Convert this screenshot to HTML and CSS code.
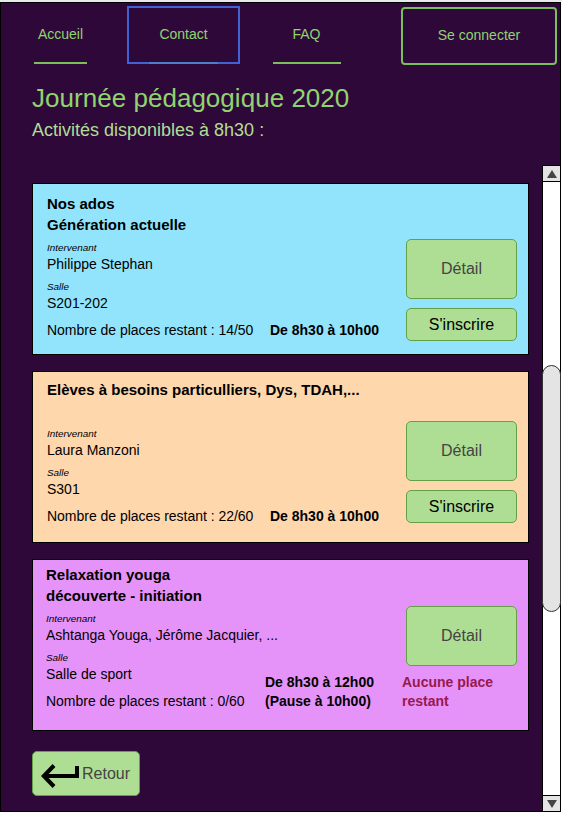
FILE: index.html
```html
<!DOCTYPE html>
<html lang="fr">
<head>
<meta charset="utf-8">
<title>Journée pédagogique 2020</title>
<link rel="stylesheet" href="styles.css">
</head>
<body>
<div class="frame">
  <nav class="nav">
    <a class="link link-home">Accueil</a>
    <a class="link link-contact"><span>Contact</span></a>
    <a class="link link-faq">FAQ</a>
    <a class="login">Se connecter</a>
  </nav>
  <div class="body">
    <main class="main">
      <h1>Journée pédagogique 2020</h1>
      <h2>Activités disponibles à 8h30 :</h2>
      <div class="cards">
        <article class="card blue">
          <div class="info">
            <h3>Nos ados<br>Génération actuelle</h3>
            <div class="label">Intervenant</div>
            <div class="value">Philippe Stephan</div>
            <div class="label">Salle</div>
            <div class="value">S201-202</div>
            <div class="places">Nombre de places restant : 14/50</div>
          </div>
          <div class="time">De 8h30 à 10h00</div>
          <div class="actions">
            <button class="btn detail">Détail</button>
            <button class="btn join">S'inscrire</button>
          </div>
        </article>
        <article class="card orange">
          <div class="info">
            <h3>Elèves à besoins particulliers, Dys, TDAH,...</h3>
            <div class="label">Intervenant</div>
            <div class="value">Laura Manzoni</div>
            <div class="label">Salle</div>
            <div class="value">S301</div>
            <div class="places">Nombre de places restant : 22/60</div>
          </div>
          <div class="time">De 8h30 à 10h00</div>
          <div class="actions">
            <button class="btn detail">Détail</button>
            <button class="btn join">S'inscrire</button>
          </div>
        </article>
        <article class="card pink">
          <div class="info">
            <h3>Relaxation youga<br>découverte - initiation</h3>
            <div class="label">Intervenant</div>
            <div class="value">Ashtanga Youga, Jérôme Jacquier, ...</div>
            <div class="label">Salle</div>
            <div class="value">Salle de sport</div>
            <div class="places">Nombre de places restant : 0/60</div>
          </div>
          <div class="time">De 8h30 à 12h00<br>(Pause à 10h00)</div>
          <div class="actions">
            <button class="btn detail">Détail</button>
            <div class="full">Aucune place<br>restant</div>
          </div>
        </article>
      </div>
      <button class="btn back">
        <svg width="38" height="24" viewBox="0 0 38 24"><path d="M36 2V12H2.500M13 1.500L2.800 12L13 22.500" fill="none" stroke="#000" stroke-width="4"/></svg>
        <span>Retour</span>
      </button>
    </main>
    <div class="scrollbar">
      <div class="arrow up"><svg width="10" height="8" viewBox="0 0 10 8"><path d="M5 0L10 8H0Z" fill="#444"/></svg></div>
      <div class="track"><div class="thumb"></div></div>
      <div class="arrow down"><svg width="10" height="8" viewBox="0 0 10 8"><path d="M0 0H10L5 8Z" fill="#444"/></svg></div>
    </div>
  </div>
</div>
</body>
</html>
```
FILE: styles.css
```css
* { box-sizing: border-box; }
body {
  margin: 0;
  height: 813px;
  overflow: hidden;
  background: #fff;
  border-top: 2px solid #e9e9ed;
  font-family: "Liberation Sans", Arial, sans-serif;
}
h1, h2, h3 { margin: 0; }
.frame {
  width: 561px;
  height: 810px;
  background: #2f083a;
  border: 1px solid #000;
  display: flex;
  flex-direction: column;
}
.nav {
  height: 62px;
  flex-shrink: 0;
  display: flex;
  align-items: flex-end;
  padding-left: 33px;
  color: #8fd46e;
  font-size: 14px;
  white-space: nowrap;
}
.link {
  height: 58px;
  line-height: 56px;
  margin-bottom: 1px;
  text-align: center;
  border-bottom: 2px solid #7abf58;
}
.link-home { width: 53px; }
.link-contact {
  width: 113px;
  margin-left: 40px;
  border: 2px solid #3f63d2;
  display: flex;
  justify-content: center;
  line-height: 52px;
}
.link-contact span {
  width: 69px;
  height: 56px;
  border-bottom: 2px solid #4a80c6;
}
.link-faq { width: 68px; margin-left: 33px; padding-right: 1px; }
.login {
  width: 156px;
  height: 58px;
  margin-left: 60px;
  line-height: 53px;
  text-align: center;
  border: 2px solid #7abf58;
  border-radius: 4px;
}
.body { flex: 1; display: flex; justify-content: space-between; }
.main { width: 528px; padding-left: 31px; }
h1 {
  margin-top: 18px;
  font-size: 26px;
  line-height: 30px;
  font-weight: 400;
  letter-spacing: 0.03px;
  color: #8fd46e;
  white-space: nowrap;
}
h2 {
  margin-top: 7px;
  font-size: 18px;
  line-height: 20px;
  font-weight: 400;
  color: #aedf94;
}
.cards { display: flex; flex-direction: column; gap: 16px; margin-top: 43px; }
.card {
  height: 172px;
  border: 1px solid #000;
  display: grid;
  align-items: end;
  align-content: start;
  white-space: nowrap;
  color: #000;
  font-size: 14px;
}
.blue, .orange { grid-template-columns: 223px 136px 111px; }
.blue { background: #92e4fd; padding: 9px 0 0 14px; }
.orange { background: #ffd7ad; padding: 7px 0 0 14px; }
.pink {
  background: #e693f9;
  padding: 4px 0 0 13px;
  grid-template-columns: 219px 137px 115px;
}
.info { display: flex; flex-direction: column; }
h3 { height: 42px; margin-bottom: 7px; font-size: 15px; line-height: 21px; }
.label { font-size: 9.9px; line-height: 12px; font-style: italic; margin-bottom: 1px; }
.value { line-height: 18px; margin-bottom: 8px; }
.places { line-height: 18px; margin-top: 1px; letter-spacing: -0.02px; }
.time { font-weight: 700; line-height: 19px; margin-bottom: -1px; }
.actions { display: flex; flex-direction: column; align-items: flex-end; gap: 9px; }
.blue .actions { margin-bottom: -2px; }
.orange .actions { margin-bottom: 2px; }
.pink .actions { gap: 7px; margin-bottom: -1px; }
.btn {
  padding: 0;
  width: 111px;
  border: 1px solid #64a146;
  border-radius: 5px;
  background: #aedd94;
  font: 16px "Liberation Sans", Arial, sans-serif;
}
.detail { height: 60px; color: #444; }
.join { height: 33px; color: #000; }
.full { width: 115px; color: #98194e; font-weight: 700; line-height: 19px; }
.back {
  margin-top: 20px;
  width: 108px;
  height: 45px;
  color: #444;
  display: flex;
  align-items: center;
  padding-left: 8px;
  gap: 3px;
}
.back svg { margin-top: 5px; }
.scrollbar {
  width: 19px;
  height: 647px;
  margin: 100px -1px -1px 0;
  border: 1px solid #000;
  background: #fff;
  display: flex;
  flex-direction: column;
}
.arrow {
  height: 16px;
  background: #e4e4e4;
  display: flex;
  align-items: center;
  justify-content: center;
}
.up { border-bottom: 1px solid #000; }
.down { border-top: 1px solid #000; }
.track { flex: 1; padding-top: 183px; }
.thumb {
  width: 19px;
  height: 247px;
  margin-left: -1px;
  border: 1px solid #333;
  border-radius: 10px;
  background: #e4e4e4;
}
```
